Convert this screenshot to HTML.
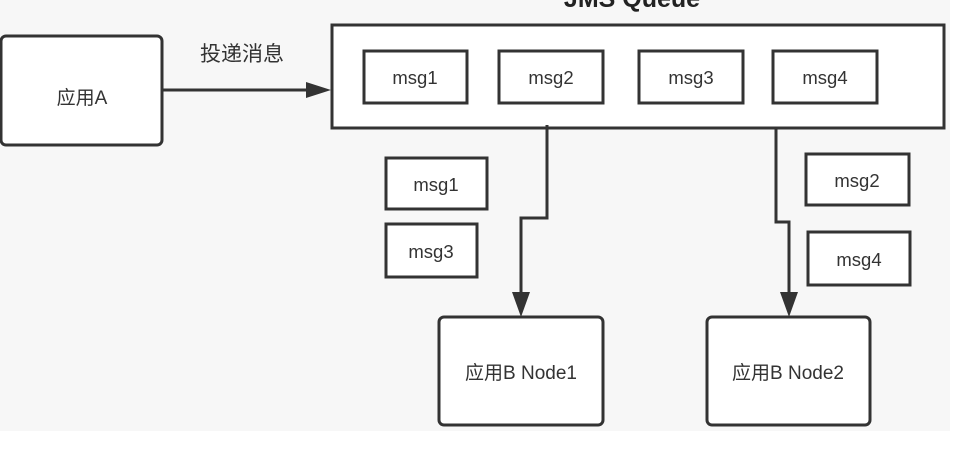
<!DOCTYPE html>
<html><head><meta charset="utf-8"><style>
body{margin:0;width:964px;height:458px;background:#fff;overflow:hidden;font-family:"Liberation Sans","Noto Sans CJK SC",sans-serif}
</style></head><body>
<svg width="964" height="458" xmlns="http://www.w3.org/2000/svg" style="position:absolute;left:0;top:0">
<rect x="0" y="0" width="950" height="431" fill="#f7f7f7"/>
<g font-family="Liberation Sans, Noto Sans CJK SC, sans-serif" fill="#333" text-anchor="middle">
<text x="632" y="7" font-size="25" font-weight="bold" fill="#222">JMS Queue</text>
<rect x="1" y="36" width="161" height="109" rx="5" fill="#fff" stroke="#333" stroke-width="3"/>
<text x="82" y="104" font-size="19">应用A</text>
<text x="242" y="61" font-size="21">投递消息</text>
<line x1="163" y1="90" x2="310" y2="90" stroke="#333" stroke-width="3"/>
<polygon points="306,82 331,90 306,98" fill="#333"/>
<rect x="332" y="25" width="612" height="103" fill="#fff" stroke="#333" stroke-width="3"/>
<g fill="#fff" stroke="#333" stroke-width="3">
<rect x="364" y="51" width="103" height="52"/>
<rect x="499" y="51" width="104" height="52"/>
<rect x="639" y="51" width="104" height="52"/>
<rect x="773" y="51" width="104" height="52"/>
<rect x="386" y="158" width="101" height="51"/>
<rect x="386" y="224" width="91" height="53"/>
<rect x="806" y="154" width="103" height="51"/>
<rect x="808" y="232" width="102" height="53"/>
<rect x="439" y="317" width="164" height="108" rx="5"/>
<rect x="707" y="317" width="163" height="108" rx="5"/>
</g>
<g font-size="18.5">
<text x="415" y="84">msg1</text>
<text x="551" y="84">msg2</text>
<text x="691" y="84">msg3</text>
<text x="825" y="84">msg4</text>
<text x="436" y="191">msg1</text>
<text x="431" y="258">msg3</text>
<text x="857" y="187">msg2</text>
<text x="859" y="266">msg4</text>
</g>
<g font-size="19">
<text x="521" y="379">应用B Node1</text>
<text x="788" y="379">应用B Node2</text>
</g>
<polyline points="547,125 547,218 521,218 521,296" fill="none" stroke="#333" stroke-width="3"/>
<polygon points="512,292 530,292 521,317" fill="#333"/>
<polyline points="776,128 776,222 789,222 789,296" fill="none" stroke="#333" stroke-width="3"/>
<polygon points="780,292 798,292 789,317" fill="#333"/>
</g>
</svg>
</body></html>
